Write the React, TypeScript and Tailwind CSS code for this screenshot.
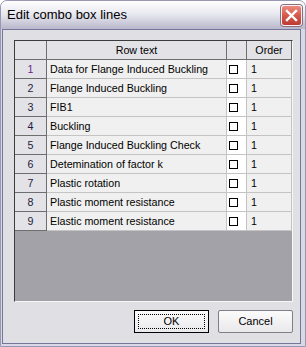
const ROWS = [
  'Data for Flange Induced Buckling',
  'Flange Induced Buckling',
  'FIB1',
  'Buckling',
  'Flange Induced Buckling Check',
  'Detemination of factor k',
  'Plastic rotation',
  'Plastic moment resistance',
  'Elastic moment resistance',
]

const font = { fontFamily: '"Liberation Sans", Arial, sans-serif' }

function CloseButton() {
  return (
    <div className="w-[21px] h-[21px] rounded-[3px] border border-[#f4f4f8] bg-gradient-to-b from-[#ec8b80] via-[#d6574c] to-[#bb3c32] shadow-[0_0_0_1px_#8c6f7a] flex items-center justify-center">
      <svg width="13" height="13" viewBox="0 0 13 13">
        <path d="M2 2 L11 11 M11 2 L2 11" stroke="#fff" strokeWidth="2.4" strokeLinecap="square" />
      </svg>
    </div>
  )
}

function Button({ label, isDefault }: { label: string; isDefault?: boolean }) {
  return (
    <div
      className={`w-[75px] h-[23px] flex items-center justify-center text-[11px] text-black bg-gradient-to-b from-[#fbfbfb] to-[#e9e9ec] ${
        isDefault ? 'border border-black' : 'border border-[#7f7f86] rounded-[2px]'
      }`}
    >
      {isDefault ? (
        <div className="w-[67px] h-[15px] border border-dotted border-black flex items-center justify-center">{label}</div>
      ) : (
        label
      )}
    </div>
  )
}

export default function App() {
  return (
    <div
      className="w-[306px] h-[347px] flex flex-col bg-[#d9d8e6] border border-[#9998b4] rounded-t-[7px] overflow-hidden"
      style={font}
    >
      <div className="h-[28px] flex items-center justify-between pl-[6px] pr-[3px] bg-gradient-to-b from-[#ffffff] via-[#e6e6ee] to-[#b8b7cb]">
        <span className="text-[13px] text-black">Edit combo box lines</span>
        <CloseButton />
      </div>
      <div className="flex-1 ml-[1px] mr-[4px] mb-[2px] border border-[#76759a] bg-[#e0dfe3] pl-[11px] pr-[7px] pt-[10px] flex flex-col">
        <div className="h-[262px] flex flex-col border-t border-l border-[#3c3c3c] border-b border-r border-b-[#f6f6f6] border-r-[#f6f6f6] bg-[#a3a2a8] text-[10.7px] text-black">
          <div className="grid grid-cols-[32px_180px_20px_45px] h-[19px]">
            <div className="bg-[#e3e2e7] border-r border-b border-[#6e6e6e]" />
            <div className="bg-[#e3e2e7] border-r border-b border-[#6e6e6e] flex items-center justify-center">Row text</div>
            <div className="bg-[#e3e2e7] border-r border-b border-[#6e6e6e]" />
            <div className="bg-[#e3e2e7] border-r border-b border-[#6e6e6e] flex items-center justify-center">Order</div>
          </div>
          {ROWS.map((text, i) => (
            <div key={i} className="grid grid-cols-[32px_180px_20px_45px] h-[19px]">
              <div
                className={`bg-[#e3e2e7] border-r border-b border-[#6e6e6e] flex items-center justify-center ${
                  i === 0 ? 'text-[#6b1f8a]' : 'text-[#1c1c40]'
                }`}
              >
                {i + 1}
              </div>
              <div className="bg-[#f0f0f0] border-r border-b border-[#c4c4c4] flex items-center pl-[3px] whitespace-nowrap overflow-hidden">
                {text}
              </div>
              <div className="bg-white border-r border-b border-[#c4c4c4] flex items-center pl-[2px]">
                <div className="w-[9px] h-[9px] border border-black bg-white" />
              </div>
              <div className="bg-[#f0f0f0] border-r border-b border-[#c4c4c4] flex items-center pl-[4px]">1</div>
            </div>
          ))}
          <div className="flex-1" />
        </div>
        <div className="mt-[8px] flex justify-end gap-[9px]">
          <Button label="OK" isDefault />
          <Button label="Cancel" />
        </div>
      </div>
    </div>
  )
}
